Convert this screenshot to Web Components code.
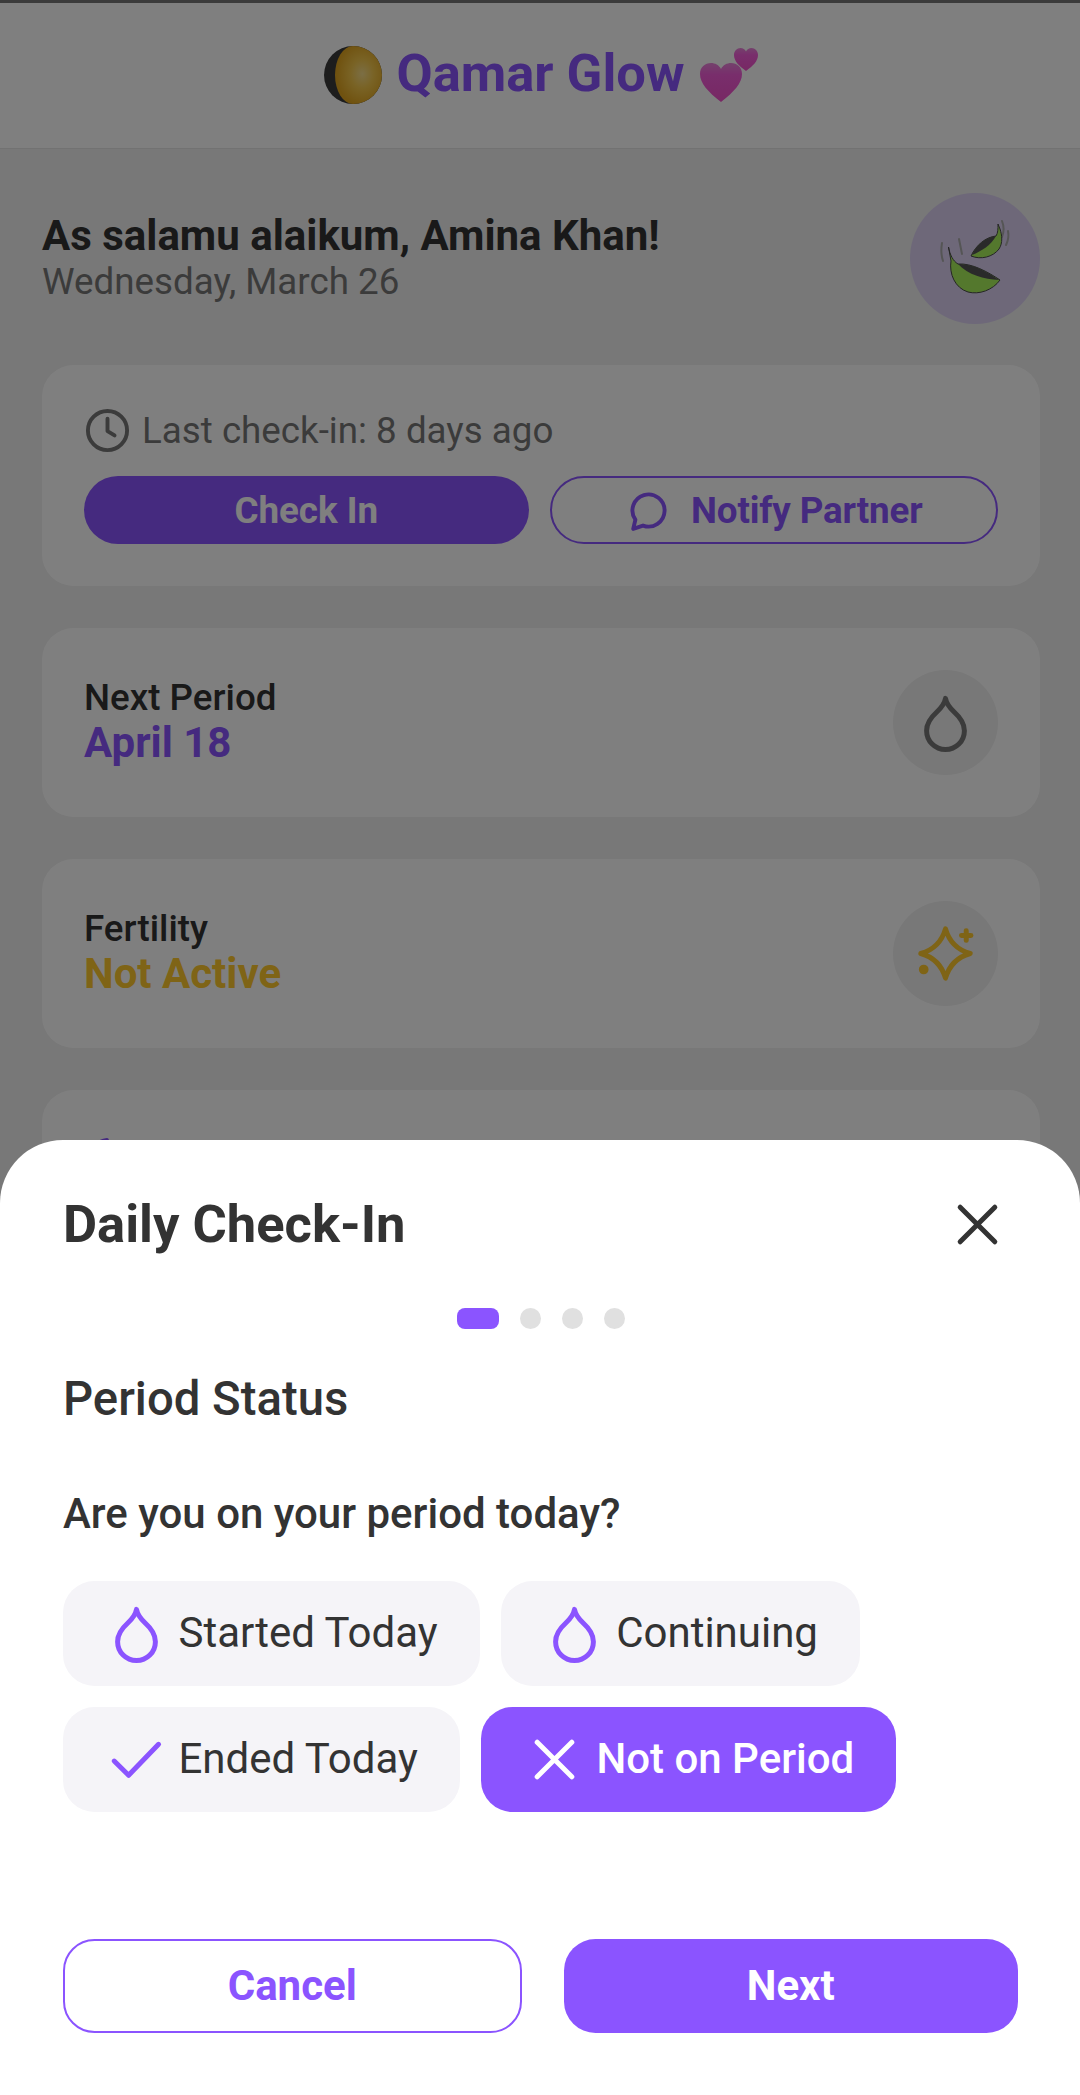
<!DOCTYPE html>
<html>
<head>
<meta charset="utf-8">
<title>Qamar Glow</title>
<style>
  html, body { margin: 0; padding: 0; background: #f0f0f0; }
  body { font-family: Roboto, "Liberation Sans", sans-serif; }
</style>
</head>
<body>
<glow-app>
  <glow-header></glow-header>
  <glow-greeting name="As salamu alaikum, Amina Khan!" date="Wednesday, March 26"></glow-greeting>
  <glow-main>
    <glow-checkin-card></glow-checkin-card>
    <glow-stat-card label="Next Period" value="April 18" color="#8b54ff" icon="drop" icon-color="#777777"></glow-stat-card>
    <glow-stat-card label="Fertility" value="Not Active" color="#ffc82c" icon="sparkle" icon-color="#ffc82c"></glow-stat-card>
    <glow-peek-card></glow-peek-card>
  </glow-main>
  <glow-sheet slot="overlay">
    <glow-option icon="drop">Started Today</glow-option>
    <glow-option icon="drop">Continuing</glow-option>
    <glow-option icon="check">Ended Today</glow-option>
    <glow-option icon="close" selected>Not on Period</glow-option>
  </glow-sheet>
</glow-app>

<script>
const ICONS = {
  drop: '<path d="M12 2.8c.4 2.4 1.8 3.8 3.400 5.300 2 1.800 3.800 3.900 3.800 7a7.200 7.200 0 0 1-14.400 0c0-3.100 1.800-5.200 3.800-7 1.600-1.500 3-2.900 3.400-5.300z"/>',
  sparkle: '<path d="M12 2.600C13.400 7.500 16.500 10.600 21.400 12 16.500 13.400 13.400 16.500 12 21.400 10.600 16.500 7.500 13.400 2.600 12 7.500 10.600 10.600 7.500 12 2.600z"/><path d="M19.900 3.300v3.700M18.100 5.100h3.600"/><circle cx="3.700" cy="18.100" r=".9"/>',
  check: '<path d="M3.500 12.600 9 18 20.400 6.200"/>',
  close: '<path d="M5.400 5.400l13.200 13.200M18.600 5.400 5.400 18.600"/>',
  clock: '<circle cx="12" cy="12" r="10"/><path d="M12 6v6.300l3.600 2.200"/>',
  chat: '<path d="M5.300 16.700A8.200 8.200 0 1 1 9.200 19.700L4.200 21.400z"/>',
  moon: '<path d="M21 12.800A9 9 0 1 1 11.200 3 7 7 0 0 0 21 12.800z"/>'
};

function icon(name, size, color, stroke) {
  return `<svg width="${size}" height="${size}" viewBox="0 0 24 24" fill="none" stroke="${color}" stroke-width="${stroke}" stroke-linecap="round" stroke-linejoin="round">${ICONS[name]}</svg>`;
}

class GlowApp extends HTMLElement {
  constructor() {
    super();
    this.attachShadow({mode: 'open'}).innerHTML = `
      <style>
        :host {
          display: block;
          position: relative;
          width: 1080px;
          height: 2095px;
          overflow: hidden;
          background: #f0f0f0;
        }
        .backdrop {
          position: absolute;
          inset: 0;
          background: rgba(0, 0, 0, 0.5);
        }
      </style>
      <slot></slot>
      <div class="backdrop"></div>
      <slot name="overlay"></slot>
    `;
  }
}

class GlowHeader extends HTMLElement {
  constructor() {
    super();
    this.attachShadow({mode: 'open'}).innerHTML = `
      <style>
        :host {
          display: flex;
          align-items: center;
          justify-content: center;
          gap: 14px;
          height: 145px;
          padding-left: 3px;
          box-sizing: content-box;
          border-top: 3px solid #777;
          border-bottom: 1px solid #e4e4e4;
          background: #fff;
        }
        h1 {
          margin: -5px 0 0;
          font: 700 52.5px/62px Roboto, sans-serif;
          color: #8b54ff;
        }
        svg { display: block; margin-top: -2px; margin-left: 1px; }
      </style>
      <svg width="58" height="58" viewBox="0 0 58 58">
        <defs>
          <radialGradient id="glow" cx="0.58" cy="0.48" r="0.55">
            <stop offset="0" stop-color="#f7dd8a"/>
            <stop offset="0.45" stop-color="#f3c64a"/>
            <stop offset="1" stop-color="#e0a41f"/>
          </radialGradient>
        </defs>
        <circle cx="29" cy="29" r="29" fill="#3a3a3a"/>
        <path d="M29 0A29 29 0 0 1 29 58 18 29 0 0 1 29 0z" fill="url(#glow)"/>
      </svg>
      <h1>Qamar Glow</h1>
      <svg width="60" height="56" viewBox="0 0 60 56">
        <defs>
          <linearGradient id="pink" x1="0" y1="0" x2="0" y2="1">
            <stop offset="0" stop-color="#e884d8"/>
            <stop offset="0.3" stop-color="#f25cd8"/>
            <stop offset="1" stop-color="#f050c8"/>
          </linearGradient>
        </defs>
        <path d="M21 55C8 45 0 36 0 27 0 20 5 16 11 16c4 0 8 2 10 6 2-4 6-6 10-6 6 0 11 4 11 11 0 9-8 18-21 28z" fill="url(#pink)"/>
        <path d="M46 24C39 19 34 14 34 8c0-4 3-7 6.500-7 2.500 0 4.500 1.300 5.500 3.500C47 2.300 49 1 51.500 1 55 1 58 4 58 8c0 6-5 11-12 16z" fill="url(#pink)"/>
      </svg>
    `;
  }
}

class GlowGreeting extends HTMLElement {
  constructor() {
    super();
    const name = this.getAttribute('name');
    const date = this.getAttribute('date');
    this.attachShadow({mode: 'open'}).innerHTML = `
      <style>
        :host {
          display: flex;
          align-items: center;
          justify-content: space-between;
          padding: 44px 40px 41px 42px;
        }
        .text { margin-top: -4px; }
        .hello {
          font: 700 42px/49px Roboto, sans-serif;
          color: #333;
        }
        .date {
          font: 400 36.75px/43px Roboto, sans-serif;
          color: #777;
        }
        .avatar {
          display: flex;
          width: 130px;
          height: 131px;
          border-radius: 50%;
          background: rgba(139, 84, 255, 0.2);
        }
        svg { display: block; }
      </style>
      <div class="text">
        <div class="hello">${name}</div>
        <div class="date">${date}</div>
      </div>
      <div class="avatar">
        <svg width="130" height="131" viewBox="30 14 130 131">
          <g fill="none" stroke="#aaa" stroke-width="2" stroke-linecap="round">
            <path d="M62 64c-1 6-1 12 1 18"/>
            <path d="M79 60c1 5 2 10 3 15"/>
            <path d="M122 42c2 5 2 11 0 16"/>
            <path d="M128 52c1 5 0 10-2 14"/>
          </g>
          <path d="M68.500 68C70 76 73 82 78 85c14-1 30 8 42 16-7 10-21 15-32 12C75 109 69 95 71 82z" fill="#a9f05a" stroke="#4a4a4a" stroke-width="1"/>
          <path d="M78 85c14-1 30 8 41 16-15-1-31-5-41-16z" fill="#555"/>
          <path d="M118 45c0 5 0 9-2 12-10 1-20 9-25 20 10 4 22 1 28-7 4-6 3-14 1-20z" fill="#a9f05a" stroke="#4a4a4a" stroke-width="1"/>
          <path d="M116 57c-10 1-20 9-24 19 10-4 19-10 24-19z" fill="#555"/>
        </svg>
      </div>
    `;
  }
}

class GlowMain extends HTMLElement {
  constructor() {
    super();
    this.attachShadow({mode: 'open'}).innerHTML = `
      <style>
        :host {
          display: flex;
          flex-direction: column;
          gap: 42px;
          padding: 0 40px 0 42px;
        }
      </style>
      <slot></slot>
    `;
  }
}

class GlowCheckinCard extends HTMLElement {
  constructor() {
    super();
    this.attachShadow({mode: 'open'}).innerHTML = `
      <style>
        :host {
          display: flex;
          flex-direction: column;
          gap: 22px;
          padding: 42px;
          border-radius: 31.5px;
          background: #fff;
        }
        .last {
          display: flex;
          align-items: center;
          gap: 11px;
          height: 47px;
          font: 400 36.75px/43px Roboto, sans-serif;
          color: #777;
        }
        .actions {
          display: flex;
          gap: 21px;
        }
        .btn {
          flex: 1;
          display: flex;
          align-items: center;
          justify-content: center;
          gap: 19px;
          height: 68px;
          box-sizing: border-box;
          border-radius: 34px;
          font: 700 36.75px/43px Roboto, sans-serif;
        }
        .primary { background: #8b54ff; color: #fff; }
        .outline { border: 2.500px solid #8b54ff; color: #8b54ff; letter-spacing: -0.15px; }
        svg { display: block; }
      </style>
      <div class="last">${icon('clock', 47, '#777', 2)}<span>Last check-in: 8 days ago</span></div>
      <div class="actions">
        <div class="btn primary">Check In</div>
        <div class="btn outline">${icon('chat', 47, '#8b54ff', 2)}<span>Notify Partner</span></div>
      </div>
    `;
  }
}

class GlowStatCard extends HTMLElement {
  constructor() {
    super();
    const label = this.getAttribute('label');
    const value = this.getAttribute('value');
    const color = this.getAttribute('color');
    const iconName = this.getAttribute('icon');
    const iconColor = this.getAttribute('icon-color');
    this.attachShadow({mode: 'open'}).innerHTML = `
      <style>
        :host {
          display: flex;
          align-items: center;
          justify-content: space-between;
          padding: 42px;
          border-radius: 31.5px;
          background: #fff;
        }
        .text { margin-top: -2px; }
        .label {
          font: 500 36.75px/43px Roboto, sans-serif;
          color: #333;
        }
        .value {
          font: 700 42px/48px Roboto, sans-serif;
          color: ${color};
        }
        .circle {
          display: flex;
          align-items: center;
          justify-content: center;
          width: 105px;
          height: 105px;
          border-radius: 50%;
          background: #f0f0f0;
        }
        svg { display: block; }
      </style>
      <div class="text">
        <div class="label">${label}</div>
        <div class="value">${value}</div>
      </div>
      <div class="circle">${icon(iconName, 63, iconColor, 1.9)}</div>
    `;
  }
}

// only the top of this card shows above the sheet
class GlowPeekCard extends HTMLElement {
  constructor() {
    super();
    this.attachShadow({mode: 'open'}).innerHTML = `
      <style>
        :host {
          display: block;
          height: 189px;
          box-sizing: border-box;
          padding: 44px 42px 42px 43px;
          border-radius: 31.5px;
          background: #fff;
        }
        svg { display: block; }
      </style>
      ${icon('moon', 47, '#8b54ff', 2)}
    `;
  }
}

class GlowStepDots extends HTMLElement {
  constructor() {
    super();
    this.attachShadow({mode: 'open'}).innerHTML = `
      <style>
        :host {
          display: flex;
          justify-content: center;
          gap: 21px;
        }
        span {
          width: 21px;
          height: 21px;
          border-radius: 50%;
          background: #e0e0e0;
        }
        .on {
          width: 42px;
          border-radius: 8px;
          background: #8b54ff;
        }
      </style>
      <span class="on"></span><span></span><span></span><span></span>
    `;
  }
}

class GlowOption extends HTMLElement {
  constructor() {
    super();
    const selected = this.hasAttribute('selected');
    const color = selected ? '#fff' : '#8b54ff';
    this.attachShadow({mode: 'open'}).innerHTML = `
      <style>
        :host {
          display: flex;
          align-items: center;
          gap: 10.500px;
          height: 105px;
          box-sizing: border-box;
          padding: 0 42px;
          border-radius: 31.5px;
          background: ${selected ? '#8b54ff' : '#f5f4f8'};
          color: ${selected ? '#fff' : '#333'};
          font: ${selected ? 500 : 400} 42px/49px Roboto, sans-serif;
        }
        span { margin-top: -2px; }
        svg { display: block; }
      </style>
      ${icon(this.getAttribute('icon'), 63, color, 1.9)}
      <span><slot></slot></span>
    `;
  }
}

class GlowSheet extends HTMLElement {
  constructor() {
    super();
    this.attachShadow({mode: 'open'}).innerHTML = `
      <style>
        :host {
          position: absolute;
          left: 0;
          right: 0;
          bottom: 0;
          height: 955px;
          box-sizing: border-box;
          display: flex;
          flex-direction: column;
          padding: 42px 62px 62px 63px;
          border-radius: 63px 63px 0 0;
          background: #fff;
          color: #333;
        }
        .head {
          display: flex;
          align-items: center;
          justify-content: space-between;
          height: 84px;
          margin-bottom: 42px;
        }
        h2 {
          margin: 0;
          font: 700 52.5px/62px Roboto, sans-serif;
        }
        .close { width: 82px; display: flex; justify-content: center; }
        h3 {
          margin: 43px 0 0;
          font: 500 47.25px/55px Roboto, sans-serif;
        }
        p {
          margin: 62px 0 43px;
          font: 500 42px/49px Roboto, sans-serif;
        }
        .options {
          display: flex;
          flex-wrap: wrap;
          gap: 21px;
        }
        .actions {
          display: flex;
          gap: 42px;
          margin-top: auto;
        }
        .btn {
          flex: 1;
          display: flex;
          align-items: center;
          justify-content: center;
          height: 94.500px;
          box-sizing: border-box;
          border-radius: 31.5px;
          font: 700 42px/49px Roboto, sans-serif;
        }
        .cancel { border: 2.500px solid #8b54ff; color: #8b54ff; }
        .next { background: #8b54ff; color: #fff; }
        svg { display: block; }
      </style>
      <div class="head">
        <h2>Daily Check-In</h2>
        <div class="close">${icon('close', 63, '#333', 1.9)}</div>
      </div>
      <glow-step-dots></glow-step-dots>
      <h3>Period Status</h3>
      <p>Are you on your period today?</p>
      <div class="options"><slot></slot></div>
      <div class="actions">
        <div class="btn cancel">Cancel</div>
        <div class="btn next">Next</div>
      </div>
    `;
  }
}

customElements.define('glow-app', GlowApp);
customElements.define('glow-header', GlowHeader);
customElements.define('glow-greeting', GlowGreeting);
customElements.define('glow-main', GlowMain);
customElements.define('glow-checkin-card', GlowCheckinCard);
customElements.define('glow-stat-card', GlowStatCard);
customElements.define('glow-peek-card', GlowPeekCard);
customElements.define('glow-step-dots', GlowStepDots);
customElements.define('glow-option', GlowOption);
customElements.define('glow-sheet', GlowSheet);
</script>
</body>
</html>
